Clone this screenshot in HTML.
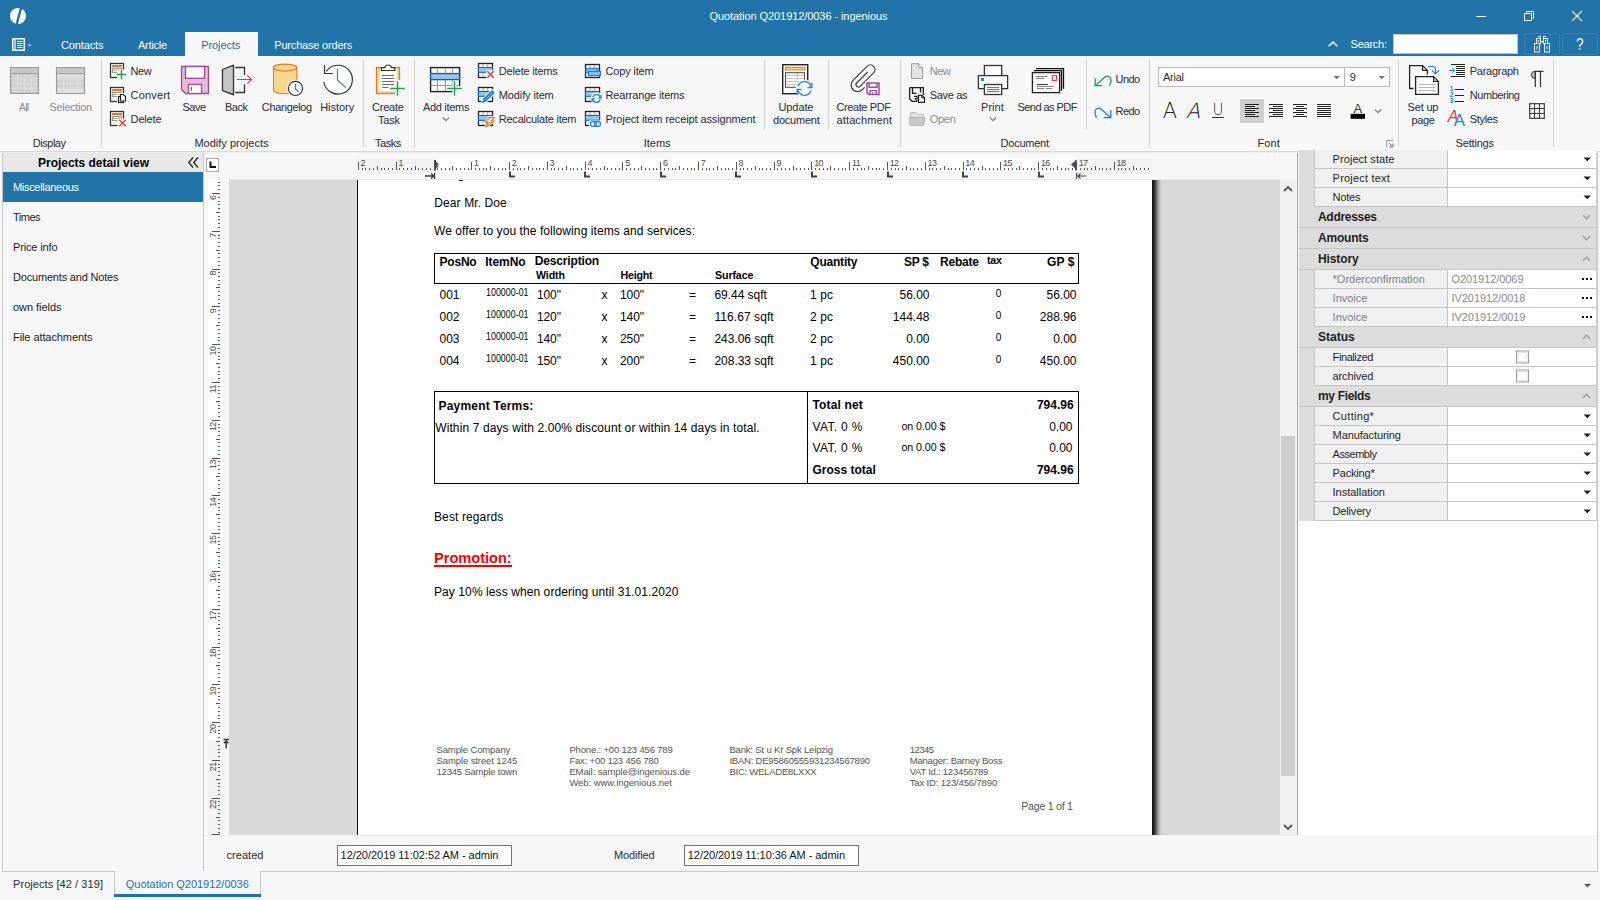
<!DOCTYPE html><html><head><meta charset="utf-8"><title>Quotation Q201912/0036 - ingenious</title><style>

html,body{margin:0;padding:0}
html{width:1600px;height:900px;overflow:hidden}
body{width:1600px;height:900px;position:relative;overflow:hidden;background:#f7f7f7;font-family:'Liberation Sans','DejaVu Sans',sans-serif;font-size:11px}
body>div,body>svg,body>span{position:absolute;display:block}
.t{white-space:pre;line-height:1;font-family:'Liberation Sans','DejaVu Sans',sans-serif}
.d{font-family:'Liberation Sans',sans-serif}
svg{overflow:visible}

</style></head><body>
<div style="left:0px;top:0px;width:1600px;height:56px;background:#2173a8;"></div>
<svg style="left:10px;top:8px" width="16" height="16" viewBox="0 0 16 16"><circle cx="8" cy="8" r="8" fill="#fff"/><path d="M11.2 -0.5 L6.6 16.5" stroke="#2173a8" stroke-width="2.4"/></svg>
<span class="t" style="top:10.69px;font-size:11px;color:#fff;left:709.49px;letter-spacing:-0.073px;">Quotation Q201912/0036 - ingenious</span>
<svg style="left:1476px;top:11px" width="10" height="10" viewBox="0 0 10 10"><path d="M0 5.5H10" stroke="#fff" stroke-width="1"/></svg>
<svg style="left:1524px;top:11px" width="10" height="10" viewBox="0 0 10 10"><path d="M2.5 2.5V0.5H9.5V7.5H7.5" fill="none" stroke="#fff"/><rect x="0.5" y="2.5" width="7" height="7" fill="none" stroke="#fff"/></svg>
<svg style="left:1572px;top:11px" width="10" height="10" viewBox="0 0 10 10"><path d="M0 0L10 10M10 0L0 10" stroke="#fff" stroke-width="1.1"/></svg>
<svg style="left:12px;top:38px" width="20" height="14" viewBox="0 0 20 14"><rect x="0.75" y="0.75" width="11.5" height="11.5" fill="none" stroke="#fff" stroke-width="1.5"/><path d="M3 0.5V12.5" stroke="#fff" stroke-width="1.2"/><path d="M5 3.5H10.5M5 5.5H10.5M5 7.5H10.5M5 9.5H10.5" stroke="#fff" stroke-width="1"/><path d="M15.5 6.5h4l-2 2z" fill="#cfe0ee"/></svg>
<span class="t" style="top:39.69px;font-size:11px;color:#fff;left:61px;letter-spacing:-0.132px;">Contacts</span>
<span class="t" style="top:39.69px;font-size:11px;color:#fff;left:138px;letter-spacing:-0.260px;">Article</span>
<div style="left:185px;top:32px;width:73px;height:24px;background:#f7f7f7;"></div>
<span class="t" style="top:39.69px;font-size:11px;color:#1f6fb0;left:201.3px;letter-spacing:-0.107px;">Projects</span>
<span class="t" style="top:39.69px;font-size:11px;color:#fff;left:274.3px;letter-spacing:-0.194px;">Purchase orders</span>
<svg style="left:1328px;top:41px" width="10" height="6" viewBox="0 0 10 6"><path d="M0.7 5.3L5 1L9.3 5.3" fill="none" stroke="#fff" stroke-width="1.5"/></svg>
<span class="t" style="top:38.69px;font-size:11px;color:#fff;left:1350.6px;letter-spacing:-0.254px;">Search:</span>
<div style="left:1393px;top:34px;width:125px;height:20px;background:#fff;border:1px solid #c9c3bd;box-sizing:border-box;"></div>
<div style="left:1524px;top:33px;width:36px;height:22px;border:1px solid #3b80b6;border-radius:2.5px;box-sizing:border-box;"></div>
<div style="left:1562px;top:33px;width:36px;height:22px;border:1px solid #3b80b6;border-radius:2.5px;box-sizing:border-box;"></div>
<svg style="left:1530px;top:34px" width="24" height="20" viewBox="0 0 24 20"><g fill="none" stroke="#f3ece6" stroke-width="1"><rect x="4.5" y="9.5" width="5" height="8.5"/><rect x="14.5" y="9.5" width="5" height="8.5"/><rect x="6.5" y="4.5" width="4" height="5"/><rect x="13.5" y="4.5" width="4" height="5"/><rect x="8.4" y="2.5" width="2.1" height="2"/><rect x="13.5" y="2.5" width="2.1" height="2"/><path d="M10.5 7.5H13.5M7 12V15.5M17 12V15.5M8.5 6V8M15.5 6V8M9.5 10L11 8.5M14.5 10L13 8.5"/></g></svg>
<span class="t" style="top:36.03px;font-size:16.5px;color:#fff;left:1576.3px;transform:scaleX(0.82);transform-origin:0 0;">?</span>
<div style="left:0px;top:56px;width:1600px;height:95px;background:#f7f7f7;"></div>
<div style="left:0px;top:151px;width:1600px;height:1px;background:#d9d9d9;"></div>
<div style="left:0px;top:152px;width:1600px;height:1px;background:#eeeeee;"></div>
<div style="left:101px;top:60px;width:1px;height:87px;background:#d2d2d2;"></div>
<div style="left:363px;top:60px;width:1px;height:87px;background:#d2d2d2;"></div>
<div style="left:414px;top:60px;width:1px;height:87px;background:#d2d2d2;"></div>
<div style="left:764px;top:60px;width:1px;height:70px;background:#d2d2d2;"></div>
<div style="left:828px;top:60px;width:1px;height:70px;background:#d2d2d2;"></div>
<div style="left:900px;top:60px;width:1px;height:87px;background:#d2d2d2;"></div>
<div style="left:1086px;top:60px;width:1px;height:70px;background:#d2d2d2;"></div>
<div style="left:1149px;top:60px;width:1px;height:87px;background:#d2d2d2;"></div>
<div style="left:1398px;top:60px;width:1px;height:87px;background:#d2d2d2;"></div>
<div style="left:1553px;top:60px;width:1px;height:87px;background:#d2d2d2;"></div>
<span class="t" style="top:137.69px;font-size:11px;color:#2b2b3a;left:32.8px;letter-spacing:-0.480px;">Display</span>
<span class="t" style="top:137.69px;font-size:11px;color:#2b2b3a;left:194.4px;letter-spacing:0.015px;">Modify projects</span>
<span class="t" style="top:137.69px;font-size:11px;color:#2b2b3a;left:375px;letter-spacing:-0.481px;">Tasks</span>
<span class="t" style="top:137.69px;font-size:11px;color:#2b2b3a;left:643.8px;letter-spacing:-0.027px;">Items</span>
<span class="t" style="top:137.69px;font-size:11px;color:#2b2b3a;left:1000.6px;letter-spacing:-0.249px;">Document</span>
<span class="t" style="top:137.69px;font-size:11px;color:#2b2b3a;left:1257.5px;letter-spacing:0.061px;">Font</span>
<span class="t" style="top:137.69px;font-size:11px;color:#2b2b3a;left:1455.6px;letter-spacing:-0.193px;">Settings</span>
<span class="t" style="top:101.69px;font-size:11px;color:#8a8a9c;left:18.75px;letter-spacing:-0.867px;">All</span>
<span class="t" style="top:101.69px;font-size:11px;color:#8a8a9c;left:49.50px;letter-spacing:-0.333px;">Selection</span>
<span class="t" style="top:65.69px;font-size:11px;color:#2b2b3a;left:130.6px;letter-spacing:-0.508px;">New</span>
<span class="t" style="top:89.69px;font-size:11px;color:#2b2b3a;left:130.6px;letter-spacing:0.161px;">Convert</span>
<span class="t" style="top:113.69px;font-size:11px;color:#2b2b3a;left:130.6px;letter-spacing:-0.159px;">Delete</span>
<span class="t" style="top:101.69px;font-size:11px;color:#2b2b3a;left:182.55px;letter-spacing:-0.526px;">Save</span>
<span class="t" style="top:101.69px;font-size:11px;color:#2b2b3a;left:225.01px;letter-spacing:-0.490px;">Back</span>
<span class="t" style="top:101.69px;font-size:11px;color:#2b2b3a;left:261.80px;letter-spacing:-0.352px;">Changelog</span>
<span class="t" style="top:101.69px;font-size:11px;color:#2b2b3a;left:320.20px;letter-spacing:-0.039px;">History</span>
<span class="t" style="top:101.69px;font-size:11px;color:#2b2b3a;left:372.01px;letter-spacing:-0.206px;">Create</span>
<span class="t" style="top:114.69px;font-size:11px;color:#2b2b3a;left:378.00px;letter-spacing:-0.208px;">Task</span>
<span class="t" style="top:101.69px;font-size:11px;color:#2b2b3a;left:423.00px;letter-spacing:-0.315px;">Add items</span>
<span class="t" style="top:65.69px;font-size:11px;color:#2b2b3a;left:498.8px;letter-spacing:-0.195px;">Delete items</span>
<span class="t" style="top:89.69px;font-size:11px;color:#2b2b3a;left:498.8px;letter-spacing:-0.125px;">Modify item</span>
<span class="t" style="top:113.69px;font-size:11px;color:#2b2b3a;left:498.8px;letter-spacing:-0.242px;">Recalculate item</span>
<span class="t" style="top:65.69px;font-size:11px;color:#2b2b3a;left:605.6px;letter-spacing:-0.191px;">Copy item</span>
<span class="t" style="top:89.69px;font-size:11px;color:#2b2b3a;left:605.6px;letter-spacing:-0.166px;">Rearrange items</span>
<span class="t" style="top:113.69px;font-size:11px;color:#2b2b3a;left:605.6px;letter-spacing:-0.115px;">Project item receipt assignment</span>
<span class="t" style="top:101.69px;font-size:11px;color:#2b2b3a;left:778.51px;letter-spacing:-0.097px;">Update</span>
<span class="t" style="top:114.69px;font-size:11px;color:#2b2b3a;left:773.00px;letter-spacing:-0.216px;">document</span>
<span class="t" style="top:101.69px;font-size:11px;color:#2b2b3a;left:836.45px;letter-spacing:-0.398px;">Create PDF</span>
<span class="t" style="top:114.69px;font-size:11px;color:#2b2b3a;left:836.55px;letter-spacing:0.120px;">attachment</span>
<span class="t" style="top:65.69px;font-size:11px;color:#8a8a9c;left:929.8px;letter-spacing:-0.508px;">New</span>
<span class="t" style="top:89.69px;font-size:11px;color:#2b2b3a;left:929.8px;letter-spacing:-0.342px;">Save as</span>
<span class="t" style="top:113.69px;font-size:11px;color:#8a8a9c;left:929.8px;letter-spacing:-0.307px;">Open</span>
<span class="t" style="top:101.69px;font-size:11px;color:#2b2b3a;left:981.05px;letter-spacing:0.019px;">Print</span>
<span class="t" style="top:101.69px;font-size:11px;color:#2b2b3a;left:1017.49px;letter-spacing:-0.542px;">Send as PDF</span>
<span class="t" style="top:73.69px;font-size:11px;color:#2b2b3a;left:1115.6px;letter-spacing:-0.632px;">Undo</span>
<span class="t" style="top:105.69px;font-size:11px;color:#2b2b3a;left:1115.6px;letter-spacing:-0.632px;">Redo</span>
<div style="left:1158px;top:67px;width:187px;height:20px;background:#fff;border:1px solid #b9b9b9;box-sizing:border-box;"></div>
<div style="left:1345px;top:67px;width:45px;height:20px;background:#fff;border:1px solid #b9b9b9;border-left:none;box-sizing:border-box;"></div>
<span class="t" style="top:71.69px;font-size:11px;color:#2b2b3a;left:1163px;letter-spacing:-0.254px;">Arial</span>
<span class="t" style="top:71.69px;font-size:11px;color:#2b2b3a;left:1349.7px;letter-spacing:-0.220px;">9</span>
<span class="t" style="top:101.22px;font-size:21px;color:#222;left:1162.81px;font-family:'DejaVu Sans Light','Liberation Sans',sans-serif;">A</span>
<span class="t" style="top:101.22px;font-size:21px;color:#222;left:1185.81px;font-style:italic;font-family:'DejaVu Sans Light','Liberation Sans',sans-serif;">A</span>
<span class="t" style="top:103.30px;font-size:15px;color:#222;left:1212.51px;font-family:'DejaVu Sans Light','Liberation Sans',sans-serif;">U</span>
<div style="left:1240px;top:99px;width:24px;height:24px;background:#cfcfcf;"></div>
<span class="t" style="top:102.00px;font-size:13px;color:#333;left:1353.46px;">A</span>
<span class="t" style="top:101.69px;font-size:11px;color:#2b2b3a;left:1407.50px;letter-spacing:-0.163px;">Set up</span>
<span class="t" style="top:114.69px;font-size:11px;color:#2b2b3a;left:1411.40px;letter-spacing:-0.295px;">page</span>
<span class="t" style="top:65.69px;font-size:11px;color:#2b2b3a;left:1469.8px;letter-spacing:-0.272px;">Paragraph</span>
<span class="t" style="top:85.50px;font-size:6.5px;color:#1e84d0;left:1449.79px;font-weight:bold;">1</span>
<span class="t" style="top:91.50px;font-size:6.5px;color:#1e84d0;left:1449.79px;font-weight:bold;">2</span>
<span class="t" style="top:97.50px;font-size:6.5px;color:#1e84d0;left:1449.79px;font-weight:bold;">3</span>
<span class="t" style="top:89.69px;font-size:11px;color:#2b2b3a;left:1469.8px;letter-spacing:-0.452px;">Numbering</span>
<span class="t" style="top:109.46px;font-size:16px;color:#e8373e;left:1447.66px;font-style:italic;">A</span>
<span class="t" style="top:112.11px;font-size:17px;color:#1e84d0;left:1453.63px;">A</span>
<span class="t" style="top:113.69px;font-size:11px;color:#2b2b3a;left:1469.8px;letter-spacing:-0.354px;">Styles</span>
<svg style="left:0;top:56px" width="1600" height="96" viewBox="0 56 1600 96"><rect x="10.6" y="67.7" width="27.8" height="25.7" fill="#d3d3d3" stroke="#9a9a9a" stroke-width="1.3"/><rect x="11.2" y="68.3" width="26.6" height="5" fill="#c8c8c8"/><path d="M11 73.6H38" stroke="#9a9a9a" stroke-width="1.1"/><path d="M17.5 74.2V92.7" stroke="#dcdcdc" stroke-width="1"/><path d="M24.5 74.2V92.7" stroke="#dcdcdc" stroke-width="1"/><path d="M31.5 74.2V92.7" stroke="#dcdcdc" stroke-width="1"/><path d="M11.2 78.8H37.8" stroke="#dcdcdc" stroke-width="1"/><path d="M11.2 83.6H37.8" stroke="#dcdcdc" stroke-width="1"/><path d="M11.2 88.4H37.8" stroke="#dcdcdc" stroke-width="1"/><rect x="56.6" y="67.7" width="27.8" height="25.7" fill="#d3d3d3" stroke="#9a9a9a" stroke-width="1.3"/><rect x="57.2" y="68.3" width="26.6" height="5" fill="#c8c8c8"/><path d="M57 73.6H84" stroke="#9a9a9a" stroke-width="1.1"/><rect x="57.2" y="74.2" width="26.6" height="4.6" fill="#dedede"/><rect x="57.2" y="88.5" width="26.6" height="4.4" fill="#dedede"/><path d="M63.5 74.2V92.7" stroke="#dcdcdc" stroke-width="1"/><path d="M70.5 74.2V92.7" stroke="#dcdcdc" stroke-width="1"/><path d="M77.5 74.2V92.7" stroke="#dcdcdc" stroke-width="1"/><path d="M57.2 78.8H83.8" stroke="#dcdcdc" stroke-width="1"/><path d="M57.2 83.6H83.8" stroke="#dcdcdc" stroke-width="1"/><path d="M57.2 88.4H83.8" stroke="#dcdcdc" stroke-width="1"/><rect x="110.5" y="63.5" width="13" height="14" fill="#fdfdfd" stroke="#333" stroke-width="1.3"/><rect x="112" y="65" width="10" height="2.2" fill="#e87722"/><rect x="112.5" y="68.5" width="9" height="4" fill="#f2f2f2" stroke="#9a9a9a" stroke-width="1"/><path d="M112.5 70.5H121.5M118.5 68.5V72.5" stroke="#9a9a9a" stroke-width=".8"/><rect x="117" y="69.5" width="9" height="9.5" fill="#f7f7f7"/><path d="M116.7 74.5H126.3M121.5 69.7V79.3" stroke="#1aa34a" stroke-width="1.4"/><rect x="110.5" y="87.5" width="13" height="14" fill="#fdfdfd" stroke="#333" stroke-width="1.3"/><rect x="112" y="89" width="10" height="2.2" fill="#e87722"/><rect x="112.5" y="92.5" width="9" height="4" fill="#f2f2f2" stroke="#9a9a9a" stroke-width="1"/><path d="M112.5 94.5H121.5M118.5 92.5V96.5" stroke="#9a9a9a" stroke-width=".8"/><rect x="117" y="93" width="10" height="11" fill="#f7f7f7"/><rect x="118.5" y="96.5" width="5" height="6" fill="#fff" stroke="#222" stroke-width="1.2"/><path d="M120.5 94.5h3l2 2v4.5h-5z" fill="#fff" stroke="#222" stroke-width="1.2"/><rect x="110.5" y="111.5" width="13" height="14" fill="#fdfdfd" stroke="#333" stroke-width="1.3"/><rect x="112" y="113" width="10" height="2.2" fill="#e87722"/><rect x="112.5" y="116.5" width="9" height="4" fill="#f2f2f2" stroke="#9a9a9a" stroke-width="1"/><path d="M112.5 118.5H121.5M118.5 116.5V120.5" stroke="#9a9a9a" stroke-width=".8"/><rect x="117.5" y="118.5" width="9" height="9" fill="#f7f7f7"/><circle cx="118" cy="122" r=".6" fill="#e87722"/><path d="M119.2 119.7L125.8 126.3M125.8 119.7L119.2 126.3" stroke="#f7f7f7" stroke-width="3.6"/><path d="M119.2 119.7L125.8 126.3M125.8 119.7L119.2 126.3" stroke="#e8373e" stroke-width="1.4"/><path d="M181.5 66.5H208.5V93.5H185.5L181.5 89.5Z" fill="#dfbcd9" stroke="#a0499d" stroke-width="1.3"/><rect x="185.5" y="66.5" width="19" height="11.8" fill="#fdfdfd" stroke="#a0499d" stroke-width="1.3"/><rect x="188.5" y="84.5" width="13" height="9" fill="#fdfdfd" stroke="#a0499d" stroke-width="1.3"/><path d="M191.5 87V90.7" stroke="#555" stroke-width="1"/><path d="M222.5 69.5L233.5 65.3V94.7L222.5 90.5Z" fill="#c8c6c4" stroke="#333" stroke-width="1.3"/><path d="M235.3 67.5H244.5V75M244.5 84.2V92.5H235.3" fill="none" stroke="#333" stroke-width="1.3"/><path d="M237 79.5H251.3M247.3 75.3L251.5 79.5L247.3 83.7" fill="none" stroke="#e8373e" stroke-width="1.2"/><path d="M273.5 67.6V90.2A11.7 3.6 0 0 0 296.9 90.2V67.6" fill="#f6d88c" stroke="#e87722" stroke-width="1.1"/><ellipse cx="285.2" cy="67.6" rx="11.7" ry="3.5" fill="#f6d88c" stroke="#e87722" stroke-width="1.1"/><circle cx="295.5" cy="88.4" r="8.6" fill="#f7f7f7"/><circle cx="295.5" cy="88.4" r="7.1" fill="#fdfdfd" stroke="#333" stroke-width="1.2"/><path d="M295.5 83.5V88.9L298.7 92" fill="none" stroke="#1e84d0" stroke-width="1.1"/><circle cx="338" cy="79.7" r="14.4" fill="#fdfdfd"/><path d="M326.2 71.4A14.4 14.4 0 1 1 323.8 82" fill="none" stroke="#333" stroke-width="1.2"/><path d="M324.5 65.3V73.5H332.8" fill="none" stroke="#333" stroke-width="1.2"/><path d="M337.5 69V80L345.8 87.6" fill="none" stroke="#1e84d0" stroke-width="1.2"/><rect x="376.5" y="67.5" width="23" height="26" fill="#f6d88c" stroke="#e87722" stroke-width="1.3"/><rect x="379" y="70" width="18" height="21.2" fill="#fdfdfd"/><path d="M381.5 70.5V67.6H384.8A3.4 3.4 0 0 1 391.4 67.6H394.7V70.5Z" fill="#fdfdfd" stroke="#333" stroke-width="1.2"/><path d="M382 75.5H394M382 78.5H394M382 81.5H394M382 84.5H394M382 87.5H388" stroke="#6b6b6b" stroke-width="1"/><rect x="395.3" y="80" width="10" height="16" fill="#f7f7f7"/><path d="M390.2 88.5H404.8M397.5 81.2V95.8" stroke="#fbfbfb" stroke-width="3.8"/><path d="M390.2 88.5H404.8M397.5 81.2V95.8" stroke="#1aa34a" stroke-width="1.4"/><rect x="430.6" y="67.6" width="29" height="24" fill="#fdfdfd" stroke="#222" stroke-width="1.4"/><path d="M437.5 68V91M445.5 68V91M452.5 68V91M431 85.5H459" stroke="#9c9c9c" stroke-width="1"/><rect x="430.6" y="73.6" width="29" height="6" fill="#93c7ee" stroke="#1464b4" stroke-width="1.4"/><rect x="452.6" y="86.2" width="10" height="10" fill="#f7f7f7"/><path d="M447.2 88.5H461.8M454.5 81.2V95.8" stroke="#fbfbfb" stroke-width="3.8"/><path d="M447.2 88.5H461.8M454.5 81.2V95.8" stroke="#1aa34a" stroke-width="1.4"/><path d="M442.8 117.4L446 120.6L449.2 117.4" fill="none" stroke="#777" stroke-width="1.2"/><rect x="478.5" y="63.5" width="14" height="14" fill="#fdfdfd" stroke="#222" stroke-width="1.3"/><path d="M483 64V77M487.7 64V77" stroke="#9c9c9c" stroke-width=".9"/><rect x="478.5" y="67.5" width="14" height="4.8" fill="#93c7ee" stroke="#1464b4" stroke-width="1.1"/><rect x="486.5" y="70.5" width="8" height="8.5" fill="#f7f7f7"/><path d="M487.3 71.3L493.7 77.7M493.7 71.3L487.3 77.7" stroke="#f7f7f7" stroke-width="3.6"/><path d="M487.3 71.3L493.7 77.7M493.7 71.3L487.3 77.7" stroke="#e8373e" stroke-width="1.4"/><rect x="478.5" y="87.5" width="14" height="14" fill="#fdfdfd" stroke="#222" stroke-width="1.3"/><path d="M483 88V101M487.7 88V101" stroke="#9c9c9c" stroke-width=".9"/><rect x="478.5" y="91.5" width="14" height="4.8" fill="#93c7ee" stroke="#1464b4" stroke-width="1.1"/><path d="M482.5 102.5L484 98.5L492 90.5L494.3 92.8L486.3 100.8Z" fill="#cfe6f8" stroke="#f7f7f7" stroke-width="2.6"/><path d="M482.8 102.3L484.2 98.6L492 90.8L494 92.8L486.2 100.6Z" fill="#1e84d0" stroke="#1e84d0" stroke-width="1.1"/><path d="M485.6 99.4L492.6 92.4" stroke="#fff" stroke-width=".9" stroke-dasharray="1 1"/><rect x="478.5" y="111.5" width="14" height="14" fill="#fdfdfd" stroke="#222" stroke-width="1.3"/><path d="M483 112V125M487.7 112V125" stroke="#9c9c9c" stroke-width=".9"/><rect x="478.5" y="115.5" width="14" height="4.8" fill="#93c7ee" stroke="#1464b4" stroke-width="1.1"/><path d="M489 117.5H494.5L491.5 121H494L485.5 127.3L488 122.5H485.6Z" fill="#fbe1c4" stroke="#f7f7f7" stroke-width="2.6"/><path d="M489 117.5H494.5L491.5 121H494L485.5 127.3L488 122.5H485.6Z" fill="#fbe1c4" stroke="#e87722" stroke-width="1.1"/><rect x="585.5" y="64.5" width="14" height="13" fill="#fdfdfd" stroke="#222" stroke-width="1.3"/><path d="M590 65V77M594.7 65V77" stroke="#9c9c9c" stroke-width=".9"/><rect x="586" y="68.5" width="12" height="4" fill="#93c7ee" stroke="#1e84d0" stroke-width="1.3"/><rect x="588.5" y="71.5" width="12" height="4" fill="#93c7ee" stroke="#1e84d0" stroke-width="1.3"/><rect x="585.5" y="87.5" width="14" height="14" fill="#fdfdfd" stroke="#222" stroke-width="1.3"/><path d="M590 88V101M594.7 88V101" stroke="#9c9c9c" stroke-width=".9"/><rect x="585.5" y="91.5" width="14" height="4.8" fill="#93c7ee" stroke="#1464b4" stroke-width="1.1"/><circle cx="596.5" cy="98.5" r="6" fill="#f7f7f7"/><path d="M592.84 97.17A3.9 3.9 0 0 1 600.34 97.82M600.16 99.83A3.9 3.9 0 0 1 592.66 99.18" fill="none" stroke="#1e84d0" stroke-width="1.3"/><path d="M600.94 95.10V98.22H598.22" fill="none" stroke="#1e84d0" stroke-width="1.3"/><path d="M592.06 101.90V98.78H594.78" fill="none" stroke="#1e84d0" stroke-width="1.3"/><rect x="585.5" y="111.5" width="14" height="14" fill="#fdfdfd" stroke="#222" stroke-width="1.3"/><path d="M590 112V125M594.7 112V125" stroke="#9c9c9c" stroke-width=".9"/><rect x="585.5" y="115.5" width="14" height="4.8" fill="#93c7ee" stroke="#1464b4" stroke-width="1.1"/><rect x="589" y="120.5" width="13" height="8" fill="#f7f7f7"/><rect x="590.5" y="121.7" width="6" height="4.6" rx="2.3" fill="none" stroke="#1e84d0" stroke-width="1.3"/><rect x="594.5" y="121.7" width="6" height="4.6" rx="2.3" fill="none" stroke="#1e84d0" stroke-width="1.3"/><rect x="782.7" y="64.7" width="25" height="29" fill="#fdfdfd" stroke="#222" stroke-width="1.4"/><rect x="785.5" y="67.3" width="19.5" height="2.6" fill="#f6d88c" stroke="#e87722" stroke-width="1"/><path d="M786 75.5H804M786 78.5H804M786 81.5H804M786 84.5H804M797.3 73V87" stroke="#c4c4c4" stroke-width="1"/><rect x="785.5" y="72.7" width="19" height="14.6" fill="none" stroke="#555" stroke-width="1.1"/><circle cx="804.5" cy="88.5" r="9" fill="#f7f7f7"/><path d="M796.5 81.5H804V87.6H796.5Z" fill="#fdfdfd" opacity=".0"/><path d="M798.11 86.17A6.8 6.8 0 0 1 811.20 87.32M810.89 90.83A6.8 6.8 0 0 1 797.80 89.68" fill="none" stroke="#1e84d0" stroke-width="1.3"/><path d="M811.80 82.80V87.72H807.28" fill="none" stroke="#1e84d0" stroke-width="1.3"/><path d="M797.20 94.20V89.28H801.72" fill="none" stroke="#1e84d0" stroke-width="1.3"/><g transform="rotate(-45)" fill="none" stroke="#444" stroke-width="1.25"><path d="M562.6 664.5H547.1A2.35 2.35 0 0 0 547.1 669.2H566.2A4.6 4.6 0 0 0 566.2 660H546.3A6.6 6.6 0 0 0 546.3 673.2H549.6"/></g><rect x="865.3" y="81.3" width="15.4" height="15" fill="#f7f7f7"/><path d="M867 83H879V94.6H868.8L867 92.8Z" fill="#fdfdfd" stroke="#a0499d" stroke-width="1.5"/><path d="M869.1 83V87.3H877.1V83M870.1 94.6V90.6H876.3V94.6" fill="none" stroke="#a0499d" stroke-width="1.4"/><path d="M872.5 92.2V93.8" stroke="#a0499d" stroke-width="1"/><path d="M911.5 63.7H918.7L922.6 67.6V78.5H911.5Z" fill="#e3e3e3" stroke="#9b9b9b" stroke-width="1"/><path d="M918.7 63.7V67.6H922.6" fill="#f2f2f2" stroke="#9b9b9b" stroke-width="1"/><path d="M909.6 87.7H923.3V95M917 101.3H912.2L909.6 98.7V87.7" fill="none" stroke="#222" stroke-width="1.3"/><path d="M912.5 88V93.3H916.5M920.5 88V92.5" fill="none" stroke="#222" stroke-width="1.3"/><path d="M914 96.3H917V101" fill="none" stroke="#222" stroke-width="1.2"/><rect x="914.8" y="98" width="1.2" height="1.8" fill="#222"/><path d="M918.5 95.3H922L924.5 97.8V102.4H918.5Z" fill="#fdfdfd" stroke="#222" stroke-width="1.3"/><path d="M921.8 95.5V98H924.3" fill="none" stroke="#222" stroke-width="1"/><path d="M910.7 124V112.5H916L917.6 114.4H923.3V124Z" fill="#e0e0e0" stroke="#bdbdbd" stroke-width="1"/><path d="M909 117.5H925L923.7 125.5H910.3Z" fill="#c9c9c9" stroke="#b5b5b5" stroke-width="1"/><rect x="984.4" y="65.5" width="17.3" height="10.5" fill="#fdfdfd" stroke="#333" stroke-width="1.3"/><rect x="978.4" y="75.6" width="29.2" height="13" fill="#fdfdfd" stroke="#333" stroke-width="1.3"/><rect x="984.4" y="84.5" width="17.3" height="10" fill="#fdfdfd" stroke="#333" stroke-width="1.3"/><path d="M987 87.5H999M987 89.5H999M987 91.5H999" stroke="#666" stroke-width=".9"/><rect x="981" y="78" width="3" height="3" fill="#1e84d0"/><path d="M989.8 117.4L993 120.6L996.2 117.4" fill="none" stroke="#777" stroke-width="1.2"/><path d="M1036 68.6H1063.5V88.8M1034 70.6H1061.5V90.8" fill="none" stroke="#111" stroke-width="1.3"/><rect x="1032.4" y="72.6" width="27.2" height="20" fill="#fdfdfd" stroke="#222" stroke-width="1.3"/><rect x="1052.3" y="75.6" width="4.3" height="5" fill="none" stroke="#e8373e" stroke-width="1.1"/><path d="M1036 76.5H1047M1036 78.5H1044M1037 86.5H1054M1037 88.5H1044M1046 88.5H1052" stroke="#777" stroke-width=".9"/><path d="M1037 84.5H1048" stroke="#333" stroke-width="1"/><path d="M1095.4 85.4L1104.4 77.4C1107 75.2 1110.6 76.2 1111 80C1111.2 82 1110.5 84 1109.4 85.7" fill="none" stroke="#1aa34a" stroke-width="1.3"/><path d="M1095.2 78.3V85.7H1102.4" fill="none" stroke="#1aa34a" stroke-width="1.3"/><path d="M1110.6 117.4L1101.6 109.4C1099 107.2 1095.4 108.2 1095 112C1094.8 114 1095.5 116 1096.6 117.7" fill="none" stroke="#1e84d0" stroke-width="1.3"/><path d="M1110.8 110.3V117.7H1103.6" fill="none" stroke="#1e84d0" stroke-width="1.3"/><path d="M1333.5 76H1340L1336.75 79.3Z M1378.5 76H1385L1381.75 79.3Z" fill="#777"/><path d="M1212 117.5H1224" stroke="#333" stroke-width="1"/><path d="M1245 104.5H1259M1245 106.5H1255M1245 108.5H1259M1245 110.5H1255M1245 112.5H1259M1245 114.5H1255M1245 116.5H1259" stroke="#222" stroke-width="1"/><path d="M1269 104.5H1283M1273 106.5H1283M1269 108.5H1283M1273 110.5H1283M1269 112.5H1283M1273 114.5H1283M1269 116.5H1283" stroke="#222" stroke-width="1"/><path d="M1293.0 104.5H1307.0M1296.0 106.5H1304.0M1293.0 108.5H1307.0M1296.0 110.5H1304.0M1293.0 112.5H1307.0M1296.0 114.5H1304.0M1293.0 116.5H1307.0" stroke="#222" stroke-width="1"/><path d="M1317 104.5H1331M1317 106.5H1331M1317 108.5H1331M1317 110.5H1331M1317 112.5H1331M1317 114.5H1331M1317 116.5H1331" stroke="#222" stroke-width="1"/><rect x="1350.6" y="113.8" width="14.4" height="5" fill="#000"/><path d="M1374.8 109.4L1378 112.6L1381.2 109.4" fill="none" stroke="#777" stroke-width="1.2"/><path d="M1386.5 147V140.5H1393" fill="none" stroke="#999" stroke-width="1"/><path d="M1389 143L1392.5 146.5M1393 143.5V147H1389.5" fill="none" stroke="#777" stroke-width="1"/><path d="M1409.6 65.6H1422.6L1427.4 70.4V88.5H1409.6Z" fill="#fdfdfd" stroke="#222" stroke-width="1.3"/><path d="M1422.6 65.6V70.4H1427.4" fill="none" stroke="#222" stroke-width="1.2"/><path d="M1415.6 76.6H1433.6L1438.4 81.4V94.4H1415.6Z" fill="#f7f7f7" stroke="#f7f7f7" stroke-width="4"/><path d="M1415.6 76.6H1433.6L1438.4 81.4V94.4H1415.6Z" fill="#fdfdfd" stroke="#222" stroke-width="1.3"/><path d="M1433.6 76.6V81.4H1438.4" fill="none" stroke="#222" stroke-width="1.2"/><path d="M1418.5 84.5H1435.5M1418.5 87.5H1435.5M1418.5 90.5H1435.5" stroke="#b5b5b5" stroke-width="1"/><path d="M1428 66.5H1432.5Q1435.5 66.5 1435.5 69.5V73.6M1432 70.4L1435.5 74L1439 70.4" fill="none" stroke="#1e84d0" stroke-width="1.2"/><path d="M1451 64.5H1465M1456 66.5H1465M1456 68.5H1465M1456 70.5H1465M1456 72.5H1465M1456 74.5H1465M1451 76.5H1465" stroke="#222" stroke-width="1"/><path d="M1449 70.5H1454.3M1452.2 68.3L1454.5 70.5L1452.2 72.7" fill="none" stroke="#1e84d0" stroke-width="1"/><path d="M1455 89.5H1464M1455 95.5H1464M1455 101.5H1464" stroke="#222" stroke-width="1"/><path d="M1535.3 71.3A3.9 3.6 0 0 0 1535.3 78.5Z" fill="#c8c8c8" stroke="#333" stroke-width="1"/><path d="M1534.5 71.3H1543.5M1535.3 71.3V87M1540.5 71.3V87" fill="none" stroke="#333" stroke-width="1.2"/><rect x="1529.7" y="103.7" width="14.6" height="14.6" fill="#fdfdfd" stroke="#333" stroke-width="1.15"/><path d="M1534.6 103.7V118.3M1539.4 103.7V118.3M1529.7 108.6H1544.3M1529.7 113.4H1544.3" stroke="#333" stroke-width="1"/></svg>
<div style="left:2px;top:153px;width:1px;height:719px;background:#c8c8c8;"></div>
<div style="left:1597px;top:153px;width:1px;height:719px;background:#c8c8c8;"></div>
<div style="left:2px;top:871px;width:1596px;height:1px;background:#c8c8c8;"></div>
<div style="left:3px;top:153px;width:200px;height:19px;background:#e8e8e8;"></div>
<span class="t" style="top:156.84px;font-size:12px;color:#000;left:38px;font-weight:bold;letter-spacing:-0.021px;">Projects detail view</span>
<svg style="left:188px;top:157px" width="11" height="11" viewBox="0 0 11 11"><path d="M5 0.5L0.8 5.5L5 10.5M10 0.5L5.8 5.5L10 10.5" fill="none" stroke="#222" stroke-width="1.3"/></svg>
<div style="left:3px;top:172px;width:200px;height:30px;background:#2173a8;"></div>
<span class="t" style="top:181.69px;font-size:11px;color:#fff;left:13px;letter-spacing:-0.309px;">Miscellaneous</span>
<span class="t" style="top:211.69px;font-size:11px;color:#1c1c24;left:13px;letter-spacing:-0.512px;">Times</span>
<span class="t" style="top:241.69px;font-size:11px;color:#1c1c24;left:13px;letter-spacing:-0.151px;">Price info</span>
<span class="t" style="top:271.69px;font-size:11px;color:#1c1c24;left:13px;letter-spacing:-0.186px;">Documents and Notes</span>
<span class="t" style="top:301.69px;font-size:11px;color:#1c1c24;left:13px;letter-spacing:-0.047px;">own fields</span>
<span class="t" style="top:331.69px;font-size:11px;color:#1c1c24;left:13px;letter-spacing:-0.080px;">File attachments</span>
<div style="left:203px;top:153px;width:1px;height:718px;background:#c8c8c8;"></div>
<div style="left:206px;top:158px;width:13px;height:14px;background:#fff;border:1px solid #ababab;box-sizing:border-box;"></div>
<svg style="left:206px;top:158px" width="13" height="14" viewBox="0 0 13 14"><path d="M4.5 3.5V9H10" fill="none" stroke="#111" stroke-width="2"/></svg>
<div style="left:358px;top:158px;width:794px;height:15px;background:#f3f3f3;"></div>
<div style="left:434px;top:158px;width:642px;height:15px;background:#fefefe;"></div>
<svg style="left:0;top:153px" width="1300" height="28" viewBox="0 153 1300 28"><path d="M358.5 162V170M377.5 166V170M396.5 162V170M415.5 166V170M434.5 162V170M452.5 166V170M471.5 162V170M490.5 166V170M509.5 162V170M528.5 166V170M547.5 162V170M566.5 166V170M585.5 162V170M604.5 166V170M622.5 162V170M641.5 166V170M660.5 162V170M679.5 166V170M698.5 162V170M717.5 166V170M736.5 162V170M755.5 166V170M774.5 162V170M793.5 166V170M811.5 162V170M830.5 166V170M849.5 162V170M868.5 166V170M887.5 162V170M906.5 166V170M925.5 162V170M944.5 166V170M963.5 162V170M982.5 166V170M1000.5 162V170M1019.5 166V170M1038.5 162V170M1057.5 166V170M1076.5 162V170M1095.5 166V170M1114.5 162V170M1133.5 166V170" stroke="#555" stroke-width="1"/><path d="M362.5 168V170M365.5 168V170M369.5 168V170M373.5 168V170M381.5 168V170M384.5 168V170M388.5 168V170M392.5 168V170M399.5 168V170M403.5 168V170M407.5 168V170M411.5 168V170M418.5 168V170M422.5 168V170M426.5 168V170M430.5 168V170M437.5 168V170M441.5 168V170M445.5 168V170M449.5 168V170M456.5 168V170M460.5 168V170M464.5 168V170M468.5 168V170M475.5 168V170M479.5 168V170M483.5 168V170M486.5 168V170M494.5 168V170M498.5 168V170M502.5 168V170M505.5 168V170M513.5 168V170M517.5 168V170M520.5 168V170M524.5 168V170M532.5 168V170M536.5 168V170M539.5 168V170M543.5 168V170M551.5 168V170M554.5 168V170M558.5 168V170M562.5 168V170M570.5 168V170M573.5 168V170M577.5 168V170M581.5 168V170M588.5 168V170M592.5 168V170M596.5 168V170M600.5 168V170M607.5 168V170M611.5 168V170M615.5 168V170M619.5 168V170M626.5 168V170M630.5 168V170M634.5 168V170M638.5 168V170M645.5 168V170M649.5 168V170M653.5 168V170M656.5 168V170M664.5 168V170M668.5 168V170M672.5 168V170M675.5 168V170M683.5 168V170M687.5 168V170M691.5 168V170M694.5 168V170M702.5 168V170M706.5 168V170M709.5 168V170M713.5 168V170M721.5 168V170M725.5 168V170M728.5 168V170M732.5 168V170M740.5 168V170M743.5 168V170M747.5 168V170M751.5 168V170M759.5 168V170M762.5 168V170M766.5 168V170M770.5 168V170M777.5 168V170M781.5 168V170M785.5 168V170M789.5 168V170M796.5 168V170M800.5 168V170M804.5 168V170M808.5 168V170M815.5 168V170M819.5 168V170M823.5 168V170M827.5 168V170M834.5 168V170M838.5 168V170M842.5 168V170M845.5 168V170M853.5 168V170M857.5 168V170M861.5 168V170M864.5 168V170M872.5 168V170M876.5 168V170M879.5 168V170M883.5 168V170M891.5 168V170M895.5 168V170M898.5 168V170M902.5 168V170M910.5 168V170M913.5 168V170M917.5 168V170M921.5 168V170M929.5 168V170M932.5 168V170M936.5 168V170M940.5 168V170M948.5 168V170M951.5 168V170M955.5 168V170M959.5 168V170M966.5 168V170M970.5 168V170M974.5 168V170M978.5 168V170M985.5 168V170M989.5 168V170M993.5 168V170M997.5 168V170M1004.5 168V170M1008.5 168V170M1012.5 168V170M1016.5 168V170M1023.5 168V170M1027.5 168V170M1031.5 168V170M1034.5 168V170M1042.5 168V170M1046.5 168V170M1050.5 168V170M1053.5 168V170M1061.5 168V170M1065.5 168V170M1068.5 168V170M1072.5 168V170M1080.5 168V170M1084.5 168V170M1087.5 168V170M1091.5 168V170M1099.5 168V170M1102.5 168V170M1106.5 168V170M1110.5 168V170M1118.5 168V170M1121.5 168V170M1125.5 168V170M1129.5 168V170M1136.5 168V170M1140.5 168V170M1144.5 168V170M1148.5 168V170" stroke="#5a5a5a" stroke-width="1"/><text x="360.6" y="165.8" font-size="9" fill="#4a4a4a" font-family="Liberation Sans,sans-serif" letter-spacing="-0.6">2</text><text x="398.4" y="165.8" font-size="9" fill="#4a4a4a" font-family="Liberation Sans,sans-serif" letter-spacing="-0.6">1</text><text x="436.2" y="165.8" font-size="9" fill="#4a4a4a" font-family="Liberation Sans,sans-serif" letter-spacing="-0.6"></text><text x="474.0" y="165.8" font-size="9" fill="#4a4a4a" font-family="Liberation Sans,sans-serif" letter-spacing="-0.6">1</text><text x="511.8" y="165.8" font-size="9" fill="#4a4a4a" font-family="Liberation Sans,sans-serif" letter-spacing="-0.6">2</text><text x="549.6" y="165.8" font-size="9" fill="#4a4a4a" font-family="Liberation Sans,sans-serif" letter-spacing="-0.6">3</text><text x="587.4" y="165.8" font-size="9" fill="#4a4a4a" font-family="Liberation Sans,sans-serif" letter-spacing="-0.6">4</text><text x="625.2" y="165.8" font-size="9" fill="#4a4a4a" font-family="Liberation Sans,sans-serif" letter-spacing="-0.6">5</text><text x="663.0" y="165.8" font-size="9" fill="#4a4a4a" font-family="Liberation Sans,sans-serif" letter-spacing="-0.6">6</text><text x="700.8" y="165.8" font-size="9" fill="#4a4a4a" font-family="Liberation Sans,sans-serif" letter-spacing="-0.6">7</text><text x="738.6" y="165.8" font-size="9" fill="#4a4a4a" font-family="Liberation Sans,sans-serif" letter-spacing="-0.6">8</text><text x="776.4" y="165.8" font-size="9" fill="#4a4a4a" font-family="Liberation Sans,sans-serif" letter-spacing="-0.6">9</text><text x="814.2" y="165.8" font-size="9" fill="#4a4a4a" font-family="Liberation Sans,sans-serif" letter-spacing="-0.6">10</text><text x="851.9" y="165.8" font-size="9" fill="#4a4a4a" font-family="Liberation Sans,sans-serif" letter-spacing="-0.6">11</text><text x="889.7" y="165.8" font-size="9" fill="#4a4a4a" font-family="Liberation Sans,sans-serif" letter-spacing="-0.6">12</text><text x="927.5" y="165.8" font-size="9" fill="#4a4a4a" font-family="Liberation Sans,sans-serif" letter-spacing="-0.6">13</text><text x="965.3" y="165.8" font-size="9" fill="#4a4a4a" font-family="Liberation Sans,sans-serif" letter-spacing="-0.6">14</text><text x="1003.1" y="165.8" font-size="9" fill="#4a4a4a" font-family="Liberation Sans,sans-serif" letter-spacing="-0.6">15</text><text x="1040.9" y="165.8" font-size="9" fill="#4a4a4a" font-family="Liberation Sans,sans-serif" letter-spacing="-0.6">16</text><text x="1078.7" y="165.8" font-size="9" fill="#4a4a4a" font-family="Liberation Sans,sans-serif" letter-spacing="-0.6">17</text><text x="1116.5" y="165.8" font-size="9" fill="#4a4a4a" font-family="Liberation Sans,sans-serif" letter-spacing="-0.6">18</text><path d="M434 159.5L439.2 164.8H437L438.8 167.6H436.4L434.6 170.4H434Z" fill="#4a4a4a"/><rect x="434" y="160" width="2" height="10.5" fill="#4a4a4a"/><path d="M1076 160.2L1071 164.6L1076 169Z" fill="#4a4a4a"/><rect x="1075" y="160" width="1.6" height="10.5" fill="#4a4a4a"/><path d="M425 176H433.5M431 173.5L433.7 176L431 178.5M434.5 172.8V179.2" fill="none" stroke="#3a3a3a" stroke-width="1.3"/><path d="M1086.3 176H1078M1080.5 173.5L1077.8 176L1080.5 178.5M1076.6 172.8V179.2" fill="none" stroke="#444" stroke-width="1.1"/><path d="M510 171.5V176.5H515" fill="none" stroke="#444" stroke-width="2"/><path d="M585 171.5V176.5H590" fill="none" stroke="#444" stroke-width="2"/><path d="M661 171.5V176.5H666" fill="none" stroke="#444" stroke-width="2"/><path d="M736 171.5V176.5H741" fill="none" stroke="#444" stroke-width="2"/><path d="M812 171.5V176.5H817" fill="none" stroke="#444" stroke-width="2"/><path d="M888 171.5V176.5H893" fill="none" stroke="#444" stroke-width="2"/><path d="M963 171.5V176.5H968" fill="none" stroke="#444" stroke-width="2"/><path d="M1039 171.5V176.5H1044" fill="none" stroke="#444" stroke-width="2"/></svg>
<div style="left:208px;top:179px;width:15px;height:657px;background:#f3f3f3;"></div>
<div style="left:208px;top:179px;width:15px;height:561px;background:#fefefe;"></div>
<svg style="left:200px;top:176px" width="32" height="662" viewBox="200 176 32 662"><path d="M212 193.5H220M216 212.5H220M212 231.5H220M216 250.5H220M212 269.5H220M216 287.5H220M212 306.5H220M216 325.5H220M212 344.5H220M216 363.5H220M212 382.5H220M216 401.5H220M212 420.5H220M216 439.5H220M212 458.5H220M216 476.5H220M212 495.5H220M216 514.5H220M212 533.5H220M216 552.5H220M212 571.5H220M216 590.5H220M212 609.5H220M216 628.5H220M212 647.5H220M216 665.5H220M212 684.5H220M216 703.5H220M212 722.5H220M216 741.5H220M212 760.5H220M216 779.5H220M212 798.5H220M216 817.5H220M212 834.5H220" stroke="#555" stroke-width="1"/><path d="M218 182.5H220M218 185.5H220M218 189.5H220M218 197.5H220M218 201.5H220M218 204.5H220M218 208.5H220M218 216.5H220M218 219.5H220M218 223.5H220M218 227.5H220M218 235.5H220M218 238.5H220M218 242.5H220M218 246.5H220M218 253.5H220M218 257.5H220M218 261.5H220M218 265.5H220M218 272.5H220M218 276.5H220M218 280.5H220M218 284.5H220M218 291.5H220M218 295.5H220M218 299.5H220M218 303.5H220M218 310.5H220M218 314.5H220M218 318.5H220M218 322.5H220M218 329.5H220M218 333.5H220M218 337.5H220M218 340.5H220M218 348.5H220M218 352.5H220M218 356.5H220M218 359.5H220M218 367.5H220M218 371.5H220M218 374.5H220M218 378.5H220M218 386.5H220M218 390.5H220M218 393.5H220M218 397.5H220M218 405.5H220M218 408.5H220M218 412.5H220M218 416.5H220M218 424.5H220M218 427.5H220M218 431.5H220M218 435.5H220M218 442.5H220M218 446.5H220M218 450.5H220M218 454.5H220M218 461.5H220M218 465.5H220M218 469.5H220M218 473.5H220M218 480.5H220M218 484.5H220M218 488.5H220M218 492.5H220M218 499.5H220M218 503.5H220M218 507.5H220M218 510.5H220M218 518.5H220M218 522.5H220M218 526.5H220M218 529.5H220M218 537.5H220M218 541.5H220M218 544.5H220M218 548.5H220M218 556.5H220M218 560.5H220M218 563.5H220M218 567.5H220M218 575.5H220M218 579.5H220M218 582.5H220M218 586.5H220M218 594.5H220M218 597.5H220M218 601.5H220M218 605.5H220M218 613.5H220M218 616.5H220M218 620.5H220M218 624.5H220M218 631.5H220M218 635.5H220M218 639.5H220M218 643.5H220M218 650.5H220M218 654.5H220M218 658.5H220M218 662.5H220M218 669.5H220M218 673.5H220M218 677.5H220M218 681.5H220M218 688.5H220M218 692.5H220M218 696.5H220M218 699.5H220M218 707.5H220M218 711.5H220M218 715.5H220M218 718.5H220M218 726.5H220M218 730.5H220M218 733.5H220M218 737.5H220M218 745.5H220M218 749.5H220M218 752.5H220M218 756.5H220M218 764.5H220M218 767.5H220M218 771.5H220M218 775.5H220M218 783.5H220M218 786.5H220M218 790.5H220M218 794.5H220M218 801.5H220M218 805.5H220M218 809.5H220M218 813.5H220M218 820.5H220M218 824.5H220M218 828.5H220M218 832.5H220" stroke="#5a5a5a" stroke-width="1"/><text transform="translate(216.3 199.9) rotate(-90)" font-size="9" fill="#4a4a4a" font-family="Liberation Sans,sans-serif" letter-spacing="-0.6">6</text><text transform="translate(216.3 237.7) rotate(-90)" font-size="9" fill="#4a4a4a" font-family="Liberation Sans,sans-serif" letter-spacing="-0.6">7</text><text transform="translate(216.3 275.5) rotate(-90)" font-size="9" fill="#4a4a4a" font-family="Liberation Sans,sans-serif" letter-spacing="-0.6">8</text><text transform="translate(216.3 313.3) rotate(-90)" font-size="9" fill="#4a4a4a" font-family="Liberation Sans,sans-serif" letter-spacing="-0.6">9</text><text transform="translate(216.3 355.5) rotate(-90)" font-size="9" fill="#4a4a4a" font-family="Liberation Sans,sans-serif" letter-spacing="-0.6">10</text><text transform="translate(216.3 393.3) rotate(-90)" font-size="9" fill="#4a4a4a" font-family="Liberation Sans,sans-serif" letter-spacing="-0.6">11</text><text transform="translate(216.3 431.1) rotate(-90)" font-size="9" fill="#4a4a4a" font-family="Liberation Sans,sans-serif" letter-spacing="-0.6">12</text><text transform="translate(216.3 468.9) rotate(-90)" font-size="9" fill="#4a4a4a" font-family="Liberation Sans,sans-serif" letter-spacing="-0.6">13</text><text transform="translate(216.3 506.7) rotate(-90)" font-size="9" fill="#4a4a4a" font-family="Liberation Sans,sans-serif" letter-spacing="-0.6">14</text><text transform="translate(216.3 544.5) rotate(-90)" font-size="9" fill="#4a4a4a" font-family="Liberation Sans,sans-serif" letter-spacing="-0.6">15</text><text transform="translate(216.3 582.2) rotate(-90)" font-size="9" fill="#4a4a4a" font-family="Liberation Sans,sans-serif" letter-spacing="-0.6">16</text><text transform="translate(216.3 620.0) rotate(-90)" font-size="9" fill="#4a4a4a" font-family="Liberation Sans,sans-serif" letter-spacing="-0.6">17</text><text transform="translate(216.3 657.8) rotate(-90)" font-size="9" fill="#4a4a4a" font-family="Liberation Sans,sans-serif" letter-spacing="-0.6">18</text><text transform="translate(216.3 695.6) rotate(-90)" font-size="9" fill="#4a4a4a" font-family="Liberation Sans,sans-serif" letter-spacing="-0.6">19</text><text transform="translate(216.3 733.4) rotate(-90)" font-size="9" fill="#4a4a4a" font-family="Liberation Sans,sans-serif" letter-spacing="-0.6">20</text><text transform="translate(216.3 771.2) rotate(-90)" font-size="9" fill="#4a4a4a" font-family="Liberation Sans,sans-serif" letter-spacing="-0.6">21</text><text transform="translate(216.3 809.0) rotate(-90)" font-size="9" fill="#4a4a4a" font-family="Liberation Sans,sans-serif" letter-spacing="-0.6">22</text><path d="M223.5 739.5H229M226.2 748.5V741M224 743.2L226.2 741L228.4 743.2" fill="none" stroke="#3a3a3a" stroke-width="1.5"/></svg>
<div style="left:229px;top:179px;width:1051px;height:656px;background:#d9d9d9;"></div>
<div style="left:229px;top:179px;width:1051px;height:1px;background:#e6e6e6;"></div>
<div style="left:358px;top:180px;width:794px;height:655px;background:#fff;"></div>
<div style="left:357px;top:180px;width:1px;height:655px;background:#111;"></div>
<div style="left:1152px;top:180px;width:10px;height:655px;background:linear-gradient(90deg,#111 0,#222 18%,#5a5a5a 40%,#a5a5a5 65%,#d0d0d0 88%,#d9d9d9 100%);"></div>
<div style="left:459px;top:180px;width:4px;height:1.4px;background:#111;"></div>
<div style="left:1280px;top:179px;width:17px;height:656px;background:#f0f0f0;"></div>
<div style="left:1281px;top:436px;width:14px;height:340px;background:#cdcdcd;"></div>
<div style="left:1297px;top:153px;width:1px;height:682px;background:#a9a9a9;"></div>
<svg style="left:1283px;top:185px" width="10" height="8" viewBox="0 0 10 8"><path d="M1 6L5 2L9 6" fill="none" stroke="#555" stroke-width="1.8"/></svg>
<svg style="left:1283px;top:823px" width="10" height="8" viewBox="0 0 10 8"><path d="M1 2L5 6L9 2" fill="none" stroke="#555" stroke-width="1.8"/></svg>
<span class="t" style="top:196.84px;font-size:12px;color:#000;left:434.3px;letter-spacing:0.104px;font-family:'Liberation Sans',sans-serif;">Dear Mr. Doe</span>
<span class="t" style="top:224.84px;font-size:12px;color:#000;left:434px;letter-spacing:0.083px;font-family:'Liberation Sans',sans-serif;">We offer to you the following items and services:</span>
<div style="left:434px;top:253px;width:645px;height:31px;border:1px solid #000;box-sizing:border-box;"></div>
<span class="t" style="top:255.84px;font-size:12px;color:#000;left:439.5px;font-weight:bold;letter-spacing:-0.204px;font-family:'Liberation Sans',sans-serif;">PosNo</span>
<span class="t" style="top:255.84px;font-size:12px;color:#000;left:485.2px;font-weight:bold;letter-spacing:-0.034px;font-family:'Liberation Sans',sans-serif;">ItemNo</span>
<span class="t" style="top:254.84px;font-size:12px;color:#000;left:534.7px;font-weight:bold;letter-spacing:-0.152px;font-family:'Liberation Sans',sans-serif;">Description</span>
<span class="t" style="top:269.97px;font-size:10.67px;color:#000;left:536px;font-weight:bold;letter-spacing:-0.125px;font-family:'Liberation Sans',sans-serif;">Width</span>
<span class="t" style="top:269.97px;font-size:10.67px;color:#000;left:620.6px;font-weight:bold;letter-spacing:-0.231px;font-family:'Liberation Sans',sans-serif;">Height</span>
<span class="t" style="top:269.97px;font-size:10.67px;color:#000;left:715px;font-weight:bold;letter-spacing:-0.116px;font-family:'Liberation Sans',sans-serif;">Surface</span>
<span class="t" style="top:255.84px;font-size:12px;color:#000;left:810.3px;font-weight:bold;letter-spacing:-0.210px;font-family:'Liberation Sans',sans-serif;">Quantity</span>
<span class="t" style="top:255.84px;font-size:12px;color:#000;left:904px;font-weight:bold;letter-spacing:-0.271px;font-family:'Liberation Sans',sans-serif;">SP $</span>
<span class="t" style="top:255.84px;font-size:12px;color:#000;left:940px;font-weight:bold;letter-spacing:-0.203px;font-family:'Liberation Sans',sans-serif;">Rebate</span>
<span class="t" style="top:254.97px;font-size:10.67px;color:#000;left:987px;font-weight:bold;letter-spacing:-0.203px;font-family:'Liberation Sans',sans-serif;">tax</span>
<span class="t" style="top:255.84px;font-size:12px;color:#000;left:1047px;font-weight:bold;letter-spacing:0.086px;font-family:'Liberation Sans',sans-serif;">GP $</span>
<span class="t" style="top:288.84px;font-size:12px;color:#000;left:439.5px;letter-spacing:-0.016px;font-family:'Liberation Sans',sans-serif;">001</span>
<span class="t" style="top:287.11px;font-size:10.5px;color:#000;left:486px;letter-spacing:0.047px;font-family:'Liberation Sans',sans-serif;transform:scaleX(0.84);transform-origin:0 0;">100000-01</span>
<span class="t" style="top:288.84px;font-size:12px;color:#000;left:536.9px;letter-spacing:-0.094px;font-family:'Liberation Sans',sans-serif;">100&quot;</span>
<span class="t" style="top:288.84px;font-size:12px;color:#000;left:601.5px;font-family:'Liberation Sans',sans-serif;">x</span>
<span class="t" style="top:288.84px;font-size:12px;color:#000;left:620px;letter-spacing:-0.094px;font-family:'Liberation Sans',sans-serif;">100&quot;</span>
<span class="t" style="top:288.84px;font-size:12px;color:#000;left:689px;font-family:'Liberation Sans',sans-serif;">=</span>
<span class="t" style="top:288.84px;font-size:12px;color:#000;left:714.4px;letter-spacing:-0.024px;font-family:'Liberation Sans',sans-serif;">69.44 sqft</span>
<span class="t" style="top:288.84px;font-size:12px;color:#000;left:810px;letter-spacing:0.104px;font-family:'Liberation Sans',sans-serif;">1 pc</span>
<span class="t" style="top:288.84px;font-size:12px;color:#000;right:670.5px;font-family:'Liberation Sans',sans-serif;">56.00</span>
<span class="t" style="top:288.94px;font-size:10px;color:#000;right:598.7px;font-family:'Liberation Sans',sans-serif;">0</span>
<span class="t" style="top:288.84px;font-size:12px;color:#000;right:523.5px;font-family:'Liberation Sans',sans-serif;">56.00</span>
<span class="t" style="top:310.84px;font-size:12px;color:#000;left:439.5px;letter-spacing:-0.016px;font-family:'Liberation Sans',sans-serif;">002</span>
<span class="t" style="top:309.11px;font-size:10.5px;color:#000;left:486px;letter-spacing:0.047px;font-family:'Liberation Sans',sans-serif;transform:scaleX(0.84);transform-origin:0 0;">100000-01</span>
<span class="t" style="top:310.84px;font-size:12px;color:#000;left:536.9px;letter-spacing:-0.094px;font-family:'Liberation Sans',sans-serif;">120&quot;</span>
<span class="t" style="top:310.84px;font-size:12px;color:#000;left:601.5px;font-family:'Liberation Sans',sans-serif;">x</span>
<span class="t" style="top:310.84px;font-size:12px;color:#000;left:620px;letter-spacing:-0.094px;font-family:'Liberation Sans',sans-serif;">140&quot;</span>
<span class="t" style="top:310.84px;font-size:12px;color:#000;left:689px;font-family:'Liberation Sans',sans-serif;">=</span>
<span class="t" style="top:310.84px;font-size:12px;color:#000;left:714.4px;letter-spacing:0.080px;font-family:'Liberation Sans',sans-serif;">116.67 sqft</span>
<span class="t" style="top:310.84px;font-size:12px;color:#000;left:810px;letter-spacing:0.104px;font-family:'Liberation Sans',sans-serif;">2 pc</span>
<span class="t" style="top:310.84px;font-size:12px;color:#000;right:670.5px;font-family:'Liberation Sans',sans-serif;">144.48</span>
<span class="t" style="top:310.94px;font-size:10px;color:#000;right:598.7px;font-family:'Liberation Sans',sans-serif;">0</span>
<span class="t" style="top:310.84px;font-size:12px;color:#000;right:523.5px;font-family:'Liberation Sans',sans-serif;">288.96</span>
<span class="t" style="top:332.84px;font-size:12px;color:#000;left:439.5px;letter-spacing:-0.016px;font-family:'Liberation Sans',sans-serif;">003</span>
<span class="t" style="top:331.11px;font-size:10.5px;color:#000;left:486px;letter-spacing:0.047px;font-family:'Liberation Sans',sans-serif;transform:scaleX(0.84);transform-origin:0 0;">100000-01</span>
<span class="t" style="top:332.84px;font-size:12px;color:#000;left:536.9px;letter-spacing:-0.094px;font-family:'Liberation Sans',sans-serif;">140&quot;</span>
<span class="t" style="top:332.84px;font-size:12px;color:#000;left:601.5px;font-family:'Liberation Sans',sans-serif;">x</span>
<span class="t" style="top:332.84px;font-size:12px;color:#000;left:620px;letter-spacing:-0.094px;font-family:'Liberation Sans',sans-serif;">250&quot;</span>
<span class="t" style="top:332.84px;font-size:12px;color:#000;left:689px;font-family:'Liberation Sans',sans-serif;">=</span>
<span class="t" style="top:332.84px;font-size:12px;color:#000;left:714.4px;letter-spacing:-0.009px;font-family:'Liberation Sans',sans-serif;">243.06 sqft</span>
<span class="t" style="top:332.84px;font-size:12px;color:#000;left:810px;letter-spacing:0.104px;font-family:'Liberation Sans',sans-serif;">2 pc</span>
<span class="t" style="top:332.84px;font-size:12px;color:#000;right:670.5px;font-family:'Liberation Sans',sans-serif;">0.00</span>
<span class="t" style="top:332.94px;font-size:10px;color:#000;right:598.7px;font-family:'Liberation Sans',sans-serif;">0</span>
<span class="t" style="top:332.84px;font-size:12px;color:#000;right:523.5px;font-family:'Liberation Sans',sans-serif;">0.00</span>
<span class="t" style="top:354.84px;font-size:12px;color:#000;left:439.5px;letter-spacing:-0.016px;font-family:'Liberation Sans',sans-serif;">004</span>
<span class="t" style="top:353.11px;font-size:10.5px;color:#000;left:486px;letter-spacing:0.047px;font-family:'Liberation Sans',sans-serif;transform:scaleX(0.84);transform-origin:0 0;">100000-01</span>
<span class="t" style="top:354.84px;font-size:12px;color:#000;left:536.9px;letter-spacing:-0.094px;font-family:'Liberation Sans',sans-serif;">150&quot;</span>
<span class="t" style="top:354.84px;font-size:12px;color:#000;left:601.5px;font-family:'Liberation Sans',sans-serif;">x</span>
<span class="t" style="top:354.84px;font-size:12px;color:#000;left:620px;letter-spacing:-0.094px;font-family:'Liberation Sans',sans-serif;">200&quot;</span>
<span class="t" style="top:354.84px;font-size:12px;color:#000;left:689px;font-family:'Liberation Sans',sans-serif;">=</span>
<span class="t" style="top:354.84px;font-size:12px;color:#000;left:714.4px;letter-spacing:-0.009px;font-family:'Liberation Sans',sans-serif;">208.33 sqft</span>
<span class="t" style="top:354.84px;font-size:12px;color:#000;left:810px;letter-spacing:0.104px;font-family:'Liberation Sans',sans-serif;">1 pc</span>
<span class="t" style="top:354.84px;font-size:12px;color:#000;right:670.5px;font-family:'Liberation Sans',sans-serif;">450.00</span>
<span class="t" style="top:354.94px;font-size:10px;color:#000;right:598.7px;font-family:'Liberation Sans',sans-serif;">0</span>
<span class="t" style="top:354.84px;font-size:12px;color:#000;right:523.5px;font-family:'Liberation Sans',sans-serif;">450.00</span>
<div style="left:434px;top:391px;width:645px;height:93px;border:1px solid #000;box-sizing:border-box;"></div>
<div style="left:807px;top:391px;width:1px;height:93px;background:#000;"></div>
<span class="t" style="top:399.84px;font-size:12px;color:#000;left:438.6px;font-weight:bold;letter-spacing:0.170px;font-family:'Liberation Sans',sans-serif;">Payment Terms:</span>
<span class="t" style="top:421.84px;font-size:12px;color:#000;left:435.2px;letter-spacing:0.117px;font-family:'Liberation Sans',sans-serif;">Within 7 days with 2.00% discount or within 14 days in total.</span>
<span class="t" style="top:399.34px;font-size:12px;color:#000;left:812.5px;font-weight:bold;letter-spacing:0.149px;font-family:'Liberation Sans',sans-serif;">Total net</span>
<span class="t" style="top:399.34px;font-size:12px;color:#000;right:526.4000000000001px;font-weight:bold;font-family:'Liberation Sans',sans-serif;">794.96</span>
<span class="t" style="top:420.84px;font-size:12px;color:#000;left:812.5px;letter-spacing:0.346px;font-family:'Liberation Sans',sans-serif;">VAT. 0 %</span>
<span class="t" style="top:420.97px;font-size:10.67px;color:#000;left:901.4px;letter-spacing:-0.057px;font-family:'Liberation Sans',sans-serif;">on 0.00 $</span>
<span class="t" style="top:420.84px;font-size:12px;color:#000;right:527.5px;font-family:'Liberation Sans',sans-serif;">0.00</span>
<span class="t" style="top:442.34px;font-size:12px;color:#000;left:812.5px;letter-spacing:0.346px;font-family:'Liberation Sans',sans-serif;">VAT. 0 %</span>
<span class="t" style="top:442.47px;font-size:10.67px;color:#000;left:901.4px;letter-spacing:-0.057px;font-family:'Liberation Sans',sans-serif;">on 0.00 $</span>
<span class="t" style="top:442.34px;font-size:12px;color:#000;right:527.5px;font-family:'Liberation Sans',sans-serif;">0.00</span>
<span class="t" style="top:463.84px;font-size:12px;color:#000;left:812.5px;font-weight:bold;letter-spacing:-0.006px;font-family:'Liberation Sans',sans-serif;">Gross total</span>
<span class="t" style="top:463.84px;font-size:12px;color:#000;right:526.4000000000001px;font-weight:bold;font-family:'Liberation Sans',sans-serif;">794.96</span>
<span class="t" style="top:510.84px;font-size:12px;color:#000;left:434px;letter-spacing:0.114px;font-family:'Liberation Sans',sans-serif;">Best regards</span>
<span class="t" style="top:550.58px;font-size:14.67px;color:#ff0000;left:434px;font-weight:bold;letter-spacing:-0.051px;font-family:'Liberation Sans',sans-serif;">Promotion:</span>
<div style="left:434px;top:565px;width:78px;height:2px;background:#ff0000;"></div>
<span class="t" style="top:585.84px;font-size:12px;color:#000;left:434px;letter-spacing:0.087px;font-family:'Liberation Sans',sans-serif;">Pay 10% less when ordering until 31.01.2020</span>
<span class="t" style="top:745.36px;font-size:9.5px;color:#555;left:436.5px;letter-spacing:-0.132px;font-family:'Liberation Sans',sans-serif;">Sample Company</span>
<span class="t" style="top:756.36px;font-size:9.5px;color:#555;left:436.5px;letter-spacing:-0.099px;font-family:'Liberation Sans',sans-serif;">Sample street 1245</span>
<span class="t" style="top:767.36px;font-size:9.5px;color:#555;left:436.5px;letter-spacing:-0.205px;font-family:'Liberation Sans',sans-serif;">12345 Sample town</span>
<span class="t" style="top:745.36px;font-size:9.5px;color:#555;left:569.4px;letter-spacing:-0.163px;font-family:'Liberation Sans',sans-serif;">Phone.: +00 123 456 789</span>
<span class="t" style="top:756.36px;font-size:9.5px;color:#555;left:569.4px;letter-spacing:-0.179px;font-family:'Liberation Sans',sans-serif;">Fax: +00 123 456 780</span>
<span class="t" style="top:767.36px;font-size:9.5px;color:#555;left:569.4px;letter-spacing:-0.104px;font-family:'Liberation Sans',sans-serif;">EMail: sample@ingenious.de</span>
<span class="t" style="top:778.36px;font-size:9.5px;color:#555;left:569.4px;letter-spacing:-0.065px;font-family:'Liberation Sans',sans-serif;">Web: www.ingenious.net</span>
<span class="t" style="top:745.36px;font-size:9.5px;color:#555;left:729.4px;letter-spacing:-0.168px;font-family:'Liberation Sans',sans-serif;">Bank: St u Kr Spk Leipzig</span>
<span class="t" style="top:756.36px;font-size:9.5px;color:#555;left:729.4px;letter-spacing:-0.212px;font-family:'Liberation Sans',sans-serif;">IBAN: DE95860555931234567890</span>
<span class="t" style="top:767.36px;font-size:9.5px;color:#555;left:729.4px;letter-spacing:-0.241px;font-family:'Liberation Sans',sans-serif;">BIC: WELADE8LXXX</span>
<span class="t" style="top:745.36px;font-size:9.5px;color:#555;left:909.7px;letter-spacing:-0.505px;font-family:'Liberation Sans',sans-serif;">12345</span>
<span class="t" style="top:756.36px;font-size:9.5px;color:#555;left:909.7px;letter-spacing:-0.202px;font-family:'Liberation Sans',sans-serif;">Manager: Barney Boss</span>
<span class="t" style="top:767.36px;font-size:9.5px;color:#555;left:909.7px;letter-spacing:-0.249px;font-family:'Liberation Sans',sans-serif;">VAT Id.: 123456789</span>
<span class="t" style="top:778.36px;font-size:9.5px;color:#555;left:909.7px;letter-spacing:-0.149px;font-family:'Liberation Sans',sans-serif;">Tax ID: 123/456/7890</span>
<span class="t" style="top:801.37px;font-size:10.67px;color:#555;left:1021.3px;letter-spacing:-0.282px;font-family:'Liberation Sans',sans-serif;">Page 1 of 1</span>
<div style="left:1299px;top:153px;width:298px;height:682px;background:#fff;"></div>
<div style="left:1299px;top:150px;width:15px;height:19px;background:#dcdcdc;"></div>
<div style="left:1314px;top:150px;width:133px;height:19px;background:#f0f0f0;"></div>
<div style="left:1447px;top:150px;width:149px;height:19px;background:#fff;"></div>
<div style="left:1314px;top:150px;width:1px;height:19px;background:#c4c4c4;"></div>
<div style="left:1447px;top:150px;width:1px;height:19px;background:#c4c4c4;"></div>
<span class="t" style="top:153.69px;font-size:11px;color:#1e1e2a;left:1332.6px;letter-spacing:0.055px;">Project state</span>
<div style="left:1314px;top:168px;width:283px;height:1px;background:#c4c4c4;"></div>
<div style="left:1299px;top:169px;width:15px;height:19px;background:#dcdcdc;"></div>
<div style="left:1314px;top:169px;width:133px;height:19px;background:#f0f0f0;"></div>
<div style="left:1447px;top:169px;width:149px;height:19px;background:#fff;"></div>
<div style="left:1314px;top:169px;width:1px;height:19px;background:#c4c4c4;"></div>
<div style="left:1447px;top:169px;width:1px;height:19px;background:#c4c4c4;"></div>
<span class="t" style="top:172.69px;font-size:11px;color:#1e1e2a;left:1332.6px;letter-spacing:0.206px;">Project text</span>
<div style="left:1314px;top:187px;width:283px;height:1px;background:#c4c4c4;"></div>
<div style="left:1299px;top:188px;width:15px;height:19px;background:#dcdcdc;"></div>
<div style="left:1314px;top:188px;width:133px;height:19px;background:#f0f0f0;"></div>
<div style="left:1447px;top:188px;width:149px;height:19px;background:#fff;"></div>
<div style="left:1314px;top:188px;width:1px;height:19px;background:#c4c4c4;"></div>
<div style="left:1447px;top:188px;width:1px;height:19px;background:#c4c4c4;"></div>
<span class="t" style="top:191.69px;font-size:11px;color:#1e1e2a;left:1332.6px;letter-spacing:-0.237px;">Notes</span>
<div style="left:1314px;top:206px;width:283px;height:1px;background:#c4c4c4;"></div>
<div style="left:1299px;top:207px;width:298px;height:21px;background:#dcdcdc;"></div>
<span class="t" style="top:210.84px;font-size:12px;color:#1e1e1e;left:1318px;font-weight:bold;letter-spacing:-0.297px;">Addresses</span>
<div style="left:1299px;top:227px;width:298px;height:1px;background:#c4c4c4;"></div>
<div style="left:1299px;top:228px;width:298px;height:21px;background:#dcdcdc;"></div>
<span class="t" style="top:231.84px;font-size:12px;color:#1e1e1e;left:1318px;font-weight:bold;letter-spacing:-0.200px;">Amounts</span>
<div style="left:1299px;top:248px;width:298px;height:1px;background:#c4c4c4;"></div>
<div style="left:1299px;top:249px;width:298px;height:21px;background:#dcdcdc;"></div>
<span class="t" style="top:252.84px;font-size:12px;color:#1e1e1e;left:1318px;font-weight:bold;letter-spacing:-0.107px;">History</span>
<div style="left:1299px;top:269px;width:298px;height:1px;background:#c4c4c4;"></div>
<div style="left:1299px;top:270px;width:15px;height:19px;background:#dcdcdc;"></div>
<div style="left:1314px;top:270px;width:133px;height:19px;background:#f0f0f0;"></div>
<div style="left:1447px;top:270px;width:149px;height:19px;background:#fff;"></div>
<div style="left:1314px;top:270px;width:1px;height:19px;background:#c4c4c4;"></div>
<div style="left:1447px;top:270px;width:1px;height:19px;background:#c4c4c4;"></div>
<span class="t" style="top:273.69px;font-size:11px;color:#808088;left:1332.6px;letter-spacing:-0.008px;">*Orderconfirmation</span>
<span class="t" style="top:273.69px;font-size:11px;color:#8a8a92;left:1451.5px;letter-spacing:-0.072px;">O201912/0069</span>
<div style="left:1314px;top:288px;width:283px;height:1px;background:#c4c4c4;"></div>
<div style="left:1299px;top:289px;width:15px;height:19px;background:#dcdcdc;"></div>
<div style="left:1314px;top:289px;width:133px;height:19px;background:#f0f0f0;"></div>
<div style="left:1447px;top:289px;width:149px;height:19px;background:#fff;"></div>
<div style="left:1314px;top:289px;width:1px;height:19px;background:#c4c4c4;"></div>
<div style="left:1447px;top:289px;width:1px;height:19px;background:#c4c4c4;"></div>
<span class="t" style="top:292.69px;font-size:11px;color:#808088;left:1332.6px;letter-spacing:-0.010px;">Invoice</span>
<span class="t" style="top:292.69px;font-size:11px;color:#8a8a92;left:1451.5px;letter-spacing:-0.053px;">IV201912/0018</span>
<div style="left:1314px;top:307px;width:283px;height:1px;background:#c4c4c4;"></div>
<div style="left:1299px;top:308px;width:15px;height:19px;background:#dcdcdc;"></div>
<div style="left:1314px;top:308px;width:133px;height:19px;background:#f0f0f0;"></div>
<div style="left:1447px;top:308px;width:149px;height:19px;background:#fff;"></div>
<div style="left:1314px;top:308px;width:1px;height:19px;background:#c4c4c4;"></div>
<div style="left:1447px;top:308px;width:1px;height:19px;background:#c4c4c4;"></div>
<span class="t" style="top:311.69px;font-size:11px;color:#808088;left:1332.6px;letter-spacing:-0.010px;">Invoice</span>
<span class="t" style="top:311.69px;font-size:11px;color:#8a8a92;left:1451.5px;letter-spacing:-0.053px;">IV201912/0019</span>
<div style="left:1314px;top:326px;width:283px;height:1px;background:#c4c4c4;"></div>
<div style="left:1299px;top:327px;width:298px;height:21px;background:#dcdcdc;"></div>
<span class="t" style="top:330.84px;font-size:12px;color:#1e1e1e;left:1318px;font-weight:bold;letter-spacing:0.003px;">Status</span>
<div style="left:1299px;top:347px;width:298px;height:1px;background:#c4c4c4;"></div>
<div style="left:1299px;top:348px;width:15px;height:19px;background:#dcdcdc;"></div>
<div style="left:1314px;top:348px;width:133px;height:19px;background:#f0f0f0;"></div>
<div style="left:1447px;top:348px;width:149px;height:19px;background:#fff;"></div>
<div style="left:1314px;top:348px;width:1px;height:19px;background:#c4c4c4;"></div>
<div style="left:1447px;top:348px;width:1px;height:19px;background:#c4c4c4;"></div>
<span class="t" style="top:351.69px;font-size:11px;color:#1e1e2a;left:1332.6px;letter-spacing:-0.416px;">Finalized</span>
<div style="left:1314px;top:366px;width:283px;height:1px;background:#c4c4c4;"></div>
<div style="left:1299px;top:367px;width:15px;height:19px;background:#dcdcdc;"></div>
<div style="left:1314px;top:367px;width:133px;height:19px;background:#f0f0f0;"></div>
<div style="left:1447px;top:367px;width:149px;height:19px;background:#fff;"></div>
<div style="left:1314px;top:367px;width:1px;height:19px;background:#c4c4c4;"></div>
<div style="left:1447px;top:367px;width:1px;height:19px;background:#c4c4c4;"></div>
<span class="t" style="top:370.69px;font-size:11px;color:#1e1e2a;left:1332.6px;letter-spacing:-0.125px;">archived</span>
<div style="left:1314px;top:385px;width:283px;height:1px;background:#c4c4c4;"></div>
<div style="left:1299px;top:386px;width:298px;height:21px;background:#dcdcdc;"></div>
<span class="t" style="top:389.84px;font-size:12px;color:#1e1e1e;left:1318px;font-weight:bold;letter-spacing:-0.332px;">my Fields</span>
<div style="left:1299px;top:406px;width:298px;height:1px;background:#c4c4c4;"></div>
<div style="left:1299px;top:407px;width:15px;height:19px;background:#dcdcdc;"></div>
<div style="left:1314px;top:407px;width:133px;height:19px;background:#f0f0f0;"></div>
<div style="left:1447px;top:407px;width:149px;height:19px;background:#fff;"></div>
<div style="left:1314px;top:407px;width:1px;height:19px;background:#c4c4c4;"></div>
<div style="left:1447px;top:407px;width:1px;height:19px;background:#c4c4c4;"></div>
<span class="t" style="top:410.69px;font-size:11px;color:#1e1e2a;left:1332.6px;letter-spacing:0.308px;">Cutting*</span>
<div style="left:1314px;top:425px;width:283px;height:1px;background:#c4c4c4;"></div>
<div style="left:1299px;top:426px;width:15px;height:19px;background:#dcdcdc;"></div>
<div style="left:1314px;top:426px;width:133px;height:19px;background:#f0f0f0;"></div>
<div style="left:1447px;top:426px;width:149px;height:19px;background:#fff;"></div>
<div style="left:1314px;top:426px;width:1px;height:19px;background:#c4c4c4;"></div>
<div style="left:1447px;top:426px;width:1px;height:19px;background:#c4c4c4;"></div>
<span class="t" style="top:429.69px;font-size:11px;color:#1e1e2a;left:1332.6px;letter-spacing:-0.118px;">Manufacturing</span>
<div style="left:1314px;top:444px;width:283px;height:1px;background:#c4c4c4;"></div>
<div style="left:1299px;top:445px;width:15px;height:19px;background:#dcdcdc;"></div>
<div style="left:1314px;top:445px;width:133px;height:19px;background:#f0f0f0;"></div>
<div style="left:1447px;top:445px;width:149px;height:19px;background:#fff;"></div>
<div style="left:1314px;top:445px;width:1px;height:19px;background:#c4c4c4;"></div>
<div style="left:1447px;top:445px;width:1px;height:19px;background:#c4c4c4;"></div>
<span class="t" style="top:448.69px;font-size:11px;color:#1e1e2a;left:1332.6px;letter-spacing:-0.470px;">Assembly</span>
<div style="left:1314px;top:463px;width:283px;height:1px;background:#c4c4c4;"></div>
<div style="left:1299px;top:464px;width:15px;height:19px;background:#dcdcdc;"></div>
<div style="left:1314px;top:464px;width:133px;height:19px;background:#f0f0f0;"></div>
<div style="left:1447px;top:464px;width:149px;height:19px;background:#fff;"></div>
<div style="left:1314px;top:464px;width:1px;height:19px;background:#c4c4c4;"></div>
<div style="left:1447px;top:464px;width:1px;height:19px;background:#c4c4c4;"></div>
<span class="t" style="top:467.69px;font-size:11px;color:#1e1e2a;left:1332.6px;letter-spacing:-0.175px;">Packing*</span>
<div style="left:1314px;top:482px;width:283px;height:1px;background:#c4c4c4;"></div>
<div style="left:1299px;top:483px;width:15px;height:19px;background:#dcdcdc;"></div>
<div style="left:1314px;top:483px;width:133px;height:19px;background:#f0f0f0;"></div>
<div style="left:1447px;top:483px;width:149px;height:19px;background:#fff;"></div>
<div style="left:1314px;top:483px;width:1px;height:19px;background:#c4c4c4;"></div>
<div style="left:1447px;top:483px;width:1px;height:19px;background:#c4c4c4;"></div>
<span class="t" style="top:486.69px;font-size:11px;color:#1e1e2a;left:1332.6px;letter-spacing:-0.027px;">Installation</span>
<div style="left:1314px;top:501px;width:283px;height:1px;background:#c4c4c4;"></div>
<div style="left:1299px;top:502px;width:15px;height:19px;background:#dcdcdc;"></div>
<div style="left:1314px;top:502px;width:133px;height:19px;background:#f0f0f0;"></div>
<div style="left:1447px;top:502px;width:149px;height:19px;background:#fff;"></div>
<div style="left:1314px;top:502px;width:1px;height:19px;background:#c4c4c4;"></div>
<div style="left:1447px;top:502px;width:1px;height:19px;background:#c4c4c4;"></div>
<span class="t" style="top:505.69px;font-size:11px;color:#1e1e2a;left:1332.6px;letter-spacing:-0.176px;">Delivery</span>
<div style="left:1314px;top:520px;width:283px;height:1px;background:#c4c4c4;"></div>
<svg style="left:0;top:150px" width="1600" height="400" viewBox="0 150 1600 400"><path d="M1583.5 157.5H1591L1587.25 161.3Z" fill="#222"/><path d="M1583.5 176.5H1591L1587.25 180.3Z" fill="#222"/><path d="M1583.5 195.5H1591L1587.25 199.3Z" fill="#222"/><path d="M1583 215.3L1586.5 218.8L1590 215.3" fill="none" stroke="#9a9a9a" stroke-width="1.3"/><path d="M1583 236.3L1586.5 239.8L1590 236.3" fill="none" stroke="#9a9a9a" stroke-width="1.3"/><path d="M1583 260.7L1586.5 257.2L1590 260.7" fill="none" stroke="#9a9a9a" stroke-width="1.3"/><rect x="1582" y="278" width="2" height="2" fill="#111"/><rect x="1586" y="278" width="2" height="2" fill="#111"/><rect x="1590" y="278" width="2" height="2" fill="#111"/><rect x="1582" y="297" width="2" height="2" fill="#111"/><rect x="1586" y="297" width="2" height="2" fill="#111"/><rect x="1590" y="297" width="2" height="2" fill="#111"/><rect x="1582" y="316" width="2" height="2" fill="#111"/><rect x="1586" y="316" width="2" height="2" fill="#111"/><rect x="1590" y="316" width="2" height="2" fill="#111"/><path d="M1583 338.7L1586.5 335.2L1590 338.7" fill="none" stroke="#9a9a9a" stroke-width="1.3"/><rect x="1516.5" y="351" width="12" height="12" fill="#fff" stroke="#9a9aa8" stroke-width="1"/><rect x="1518" y="352.5" width="9" height="9" fill="none" stroke="#e4e4e8" stroke-width="1"/><rect x="1516.5" y="370" width="12" height="12" fill="#fff" stroke="#9a9aa8" stroke-width="1"/><rect x="1518" y="371.5" width="9" height="9" fill="none" stroke="#e4e4e8" stroke-width="1"/><path d="M1583 397.7L1586.5 394.2L1590 397.7" fill="none" stroke="#9a9a9a" stroke-width="1.3"/><path d="M1583.5 414.5H1591L1587.25 418.3Z" fill="#222"/><path d="M1583.5 433.5H1591L1587.25 437.3Z" fill="#222"/><path d="M1583.5 452.5H1591L1587.25 456.3Z" fill="#222"/><path d="M1583.5 471.5H1591L1587.25 475.3Z" fill="#222"/><path d="M1583.5 490.5H1591L1587.25 494.3Z" fill="#222"/><path d="M1583.5 509.5H1591L1587.25 513.3Z" fill="#222"/></svg>
<div style="left:1596px;top:153px;width:1px;height:367px;background:#d0d0d0;"></div>
<div style="left:204px;top:835px;width:1393px;height:36px;background:#f7f7f7;"></div>
<div style="left:204px;top:835px;width:1093px;height:1px;background:#ececec;"></div>
<span class="t" style="top:849.69px;font-size:11px;color:#2b2b3a;left:226.5px;letter-spacing:0.049px;">created</span>
<div style="left:337px;top:845px;width:175px;height:21px;background:#fff;border:1px solid #737373;box-sizing:border-box;"></div>
<span class="t" style="top:849.69px;font-size:11px;color:#111;left:340.6px;letter-spacing:-0.034px;">12/20/2019 11:02:52 AM - admin</span>
<span class="t" style="top:849.69px;font-size:11px;color:#2b2b3a;left:614px;letter-spacing:-0.154px;">Modified</span>
<div style="left:684px;top:845px;width:175px;height:21px;background:#fff;border:1px solid #737373;box-sizing:border-box;"></div>
<span class="t" style="top:849.69px;font-size:11px;color:#111;left:687.8px;letter-spacing:-0.055px;">12/20/2019 11:10:36 AM - admin</span>
<span class="t" style="top:878.69px;font-size:11px;color:#2b2b3a;left:13px;letter-spacing:0.074px;">Projects [42 / 319]</span>
<div style="left:114px;top:871px;width:147px;height:23px;background:#f7f7f7;border-left:1px solid #c8c8c8;border-right:1px solid #c8c8c8;box-sizing:border-box;"></div>
<div style="left:114px;top:894px;width:147px;height:3px;background:#1f6fb8;"></div>
<span class="t" style="top:878.69px;font-size:11px;color:#1f6fb8;left:125.8px;letter-spacing:-0.026px;">Quotation Q201912/0036</span>
<svg style="left:1584px;top:884px" width="8" height="4" viewBox="0 0 8 4"><path d="M0 0H7L3.5 3.5z" fill="#555"/></svg>
</body></html>
